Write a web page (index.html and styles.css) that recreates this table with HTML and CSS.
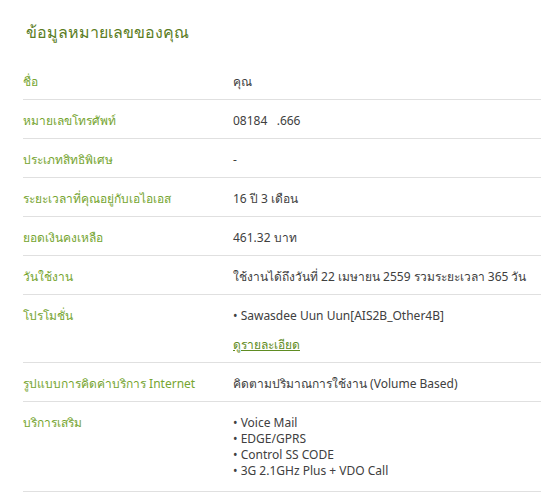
FILE: index.html
```html
<!DOCTYPE html>
<html lang="th">
<head>
    <meta charset="UTF-8">
    <title>ข้อมูลหมายเลขของคุณ</title>
    <link rel="stylesheet" href="styles.css">
</head>
<body>
    <div class="info-panel">
        <h2 class="panel-title">ข้อมูลหมายเลขของคุณ</h2>

        <div class="info-table">
            <div class="info-row">
                <div class="info-label">ชื่อ</div>
                <div class="info-value">คุณ</div>
            </div>
            <div class="info-row">
                <div class="info-label">หมายเลขโทรศัพท์</div>
                <div class="info-value">08184&nbsp;&nbsp;&nbsp;.666</div>
            </div>
            <div class="info-row">
                <div class="info-label">ประเภทสิทธิพิเศษ</div>
                <div class="info-value">-</div>
            </div>
            <div class="info-row">
                <div class="info-label">ระยะเวลาที่คุณอยู่กับเอไอเอส</div>
                <div class="info-value">16 ปี 3 เดือน</div>
            </div>
            <div class="info-row">
                <div class="info-label">ยอดเงินคงเหลือ</div>
                <div class="info-value">461.32 บาท</div>
            </div>
            <div class="info-row">
                <div class="info-label">วันใช้งาน</div>
                <div class="info-value">ใช้งานได้ถึงวันที่ 22 เมษายน 2559 รวมระยะเวลา 365 วัน</div>
            </div>
            <div class="info-row">
                <div class="info-label">โปรโมชั่น</div>
                <div class="info-value">
                    <ul class="bullet-list">
                        <li>Sawasdee Uun Uun[AIS2B_Other4B]</li>
                    </ul>
                    <a class="detail-link" href="#">ดูรายละเอียด</a>
                </div>
            </div>
            <div class="info-row">
                <div class="info-label">รูปแบบการคิดค่าบริการ Internet</div>
                <div class="info-value">คิดตามปริมาณการใช้งาน (Volume Based)</div>
            </div>
            <div class="info-row info-row-tall">
                <div class="info-label">บริการเสริม</div>
                <div class="info-value">
                    <ul class="bullet-list">
                        <li>Voice Mail</li>
                        <li>EDGE/GPRS</li>
                        <li>Control SS CODE</li>
                        <li>3G 2.1GHz Plus + VDO Call</li>
                    </ul>
                </div>
            </div>
        </div>
    </div>
</body>
</html>
```

FILE: styles.css
```css
* {
    margin: 0;
    padding: 0;
    box-sizing: border-box;
}

body {
    font-family: "Noto Sans", "DejaVu Sans", sans-serif;
    font-size: 12px;
    line-height: 16px;
    background: white;
    color: #404040;
}

.info-panel {
    padding: 21px 1px 0 23px;
}

.panel-title {
    font-size: 16px;
    font-weight: normal;
    line-height: 22px;
    color: #5b7d24;
    margin-left: 3px;
    margin-bottom: 18px;
}

.info-row {
    display: flex;
    padding: 13px 0 9px;
    border-bottom: 1px solid #e0e0e0;
}

.info-row-tall {
    padding-bottom: 12px;
}

.info-label {
    width: 210px;
    flex-shrink: 0;
    color: #76a530;
}

.info-value {
    flex: 1;
}

.bullet-list {
    list-style: none;
}

.bullet-list li::before {
    content: "• ";
}

.detail-link {
    display: inline-block;
    margin-top: 13px;
    color: #5f8c22;
    text-decoration: underline;
}
```
